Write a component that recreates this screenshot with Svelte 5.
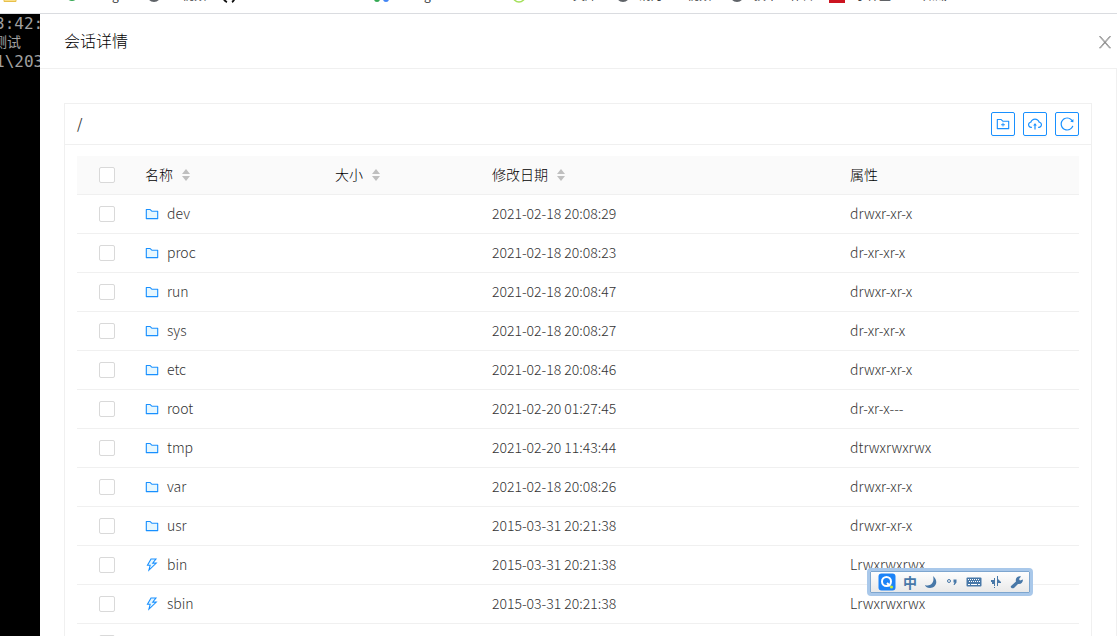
<script>
    const folder = "M880 298.4H521L403.7 186.2a8.15 8.15 0 00-5.5-2.2H144c-17.7 0-32 14.3-32 32v592c0 17.7 14.3 32 32 32h736c17.7 0 32-14.3 32-32V330.4c0-17.7-14.3-32-32-32zM840 768H184V256h188.5l119.6 114.4H840V768z";

    let files = [
        { name: "dev", date: "2021-02-18 20:08:29", mode: "drwxr-xr-x" },
        { name: "proc", date: "2021-02-18 20:08:23", mode: "dr-xr-xr-x" },
        { name: "run", date: "2021-02-18 20:08:47", mode: "drwxr-xr-x" },
        { name: "sys", date: "2021-02-18 20:08:27", mode: "dr-xr-xr-x" },
        { name: "etc", date: "2021-02-18 20:08:46", mode: "drwxr-xr-x" },
        { name: "root", date: "2021-02-20 01:27:45", mode: "dr-xr-x---" },
        { name: "tmp", date: "2021-02-20 11:43:44", mode: "dtrwxrwxrwx" },
        { name: "var", date: "2021-02-18 20:08:26", mode: "drwxr-xr-x" },
        { name: "usr", date: "2015-03-31 20:21:38", mode: "drwxr-xr-x" },
        { name: "bin", date: "2015-03-31 20:21:38", mode: "Lrwxrwxrwx" },
        { name: "sbin", date: "2015-03-31 20:21:38", mode: "Lrwxrwxrwx" },
        { name: "", date: "", mode: "" },
    ];

    let columns = [
        { title: "名称", sort: true },
        { title: "大小", sort: true },
        { title: "修改日期", sort: true },
        { title: "属性", sort: false },
    ];
</script>

<div class="page">
    <div class="bookmarks">
        <svg width="1117" height="13" font-size="12" fill="#3c4043">
            <path d="M4 -8h12v9.5h-12z" fill="#fbe08a" stroke="#e8c04a" />
            <circle cx="72" cy="-5" r="6" fill="#34a853" />
            <text x="112" y="0">g</text>
            <circle cx="154" cy="-5" r="7" fill="#5f6368" />
            <text x="182" y="0">视频</text>
            <path d="M223 -3q1 4 4 5M235 -3q-1 4 -3 5" fill="none" stroke="#111" stroke-width="2" />
            <circle cx="377" cy="-1" r="3" fill="#34a853" />
            <circle cx="386" cy="-1" r="3" fill="#4285f4" />
            <text x="424" y="0">g</text>
            <circle cx="519" cy="-4" r="6" fill="none" stroke="#a4e05a" stroke-width="1.5" />
            <text x="573" y="0">文库</text>
            <circle cx="623" cy="-5" r="7" fill="#5f6368" />
            <text x="639" y="0">消月</text>
            <text x="687" y="0">视频</text>
            <circle cx="737" cy="-5" r="7" fill="#5f6368" />
            <text x="754" y="0">技术工作台</text>
            <rect x="829" y="-8" width="16" height="11" fill="#cc1420" />
            <text x="855" y="0">小样里</text>
            <text x="911" y="0">个知識</text>
        </svg>
    </div>

    <div class="main">
        <div class="terminal">
            <p>3:42:</p>
            <p class="cjk">测试</p>
            <p>1\203</p>
        </div>

        <section class="drawer">
            <header class="drawer-header">
                <h1>会话详情</h1>
                <button class="close" aria-label="关闭">
                    <svg width="14" height="14" viewBox="0 0 14 14" fill="none" stroke="#808080">
                        <path d="M1.5 1.500h1L12.5 13h-1zM12.5 1.500h-1L1.5 13h1z" stroke-width=".8" />
                    </svg>
                </button>
            </header>

            <div class="drawer-body">
                <div class="card">
                    <div class="card-head">
                        <span class="path">/</span>
                        <div class="tools">
                            <button aria-label="新建文件夹">
                                <svg width="14" height="14" viewBox="64 64 896 896">
                                    <path d={folder} />
                                    <path d="M484 443.1V528h-84.5c-4.1 0-7.5 3.1-7.5 7v42c0 3.8 3.4 7 7.5 7H484v84.9c0 3.9 3.2 7.1 7 7.1h42c3.9 0 7-3.2 7-7.1V584h84.5c4.1 0 7.5-3.2 7.5-7v-42c0-3.9-3.4-7-7.5-7H540v-84.9c0-3.9-3.1-7.1-7-7.1h-42c-3.8 0-7 3.2-7 7.1z" />
                                </svg>
                            </button>
                            <button aria-label="上传">
                                <svg width="14" height="14" viewBox="64 64 896 896">
                                    <path d="M518.3 459a8 8 0 00-12.6 0l-112 141.7a7.98 7.98 0 006.3 12.9h73.9V856c0 4.4 3.6 8 8 8h60c4.4 0 8-3.6 8-8V613.7H624c6.7 0 10.4-7.7 6.3-12.9L518.3 459z" />
                                    <path d="M811.4 366.7C765.6 245.9 648.9 160 512.2 160S258.8 245.8 213 366.6C127.3 389.1 64 467.2 64 560c0 110.5 89.5 200 199.9 200H304c4.4 0 8-3.6 8-8v-60c0-4.4-3.6-8-8-8h-40.1c-33.7 0-65.4-13.4-89-37.7-23.5-24.2-36-56.8-34.9-90.6.9-26.4 9.9-51.2 26.2-72.1 16.7-21.3 40.1-36.8 66.1-43.7l37.9-9.9 13.9-36.6c8.6-22.8 20.6-44.1 35.7-63.4a245.6 245.6 0 0152.4-49.9c41.1-28.9 89.5-44.2 140-44.2s98.9 15.3 140 44.2c19.9 14 37.5 30.8 52.4 49.9 15.1 19.3 27.1 40.7 35.7 63.4l13.8 36.5 37.8 10C846.1 454.5 884 503.8 884 560c0 33.1-12.9 64.3-36.3 87.7a123.07 123.07 0 01-87.6 36.3H720c-4.4 0-8 3.6-8 8v60c0 4.4 3.6 8 8 8h40.1C870.5 760 960 670.5 960 560c0-92.7-63.1-170.7-148.6-193.3z" />
                                </svg>
                            </button>
                            <button aria-label="刷新">
                                <svg width="14" height="14" viewBox="64 64 896 896">
                                    <path d="M909.1 209.3l-56.4 44.1C775.8 155.1 656.2 92 521.9 92 290 92 102.3 279.5 102 511.5 101.7 743.7 289.8 932 521.9 932c181.3 0 335.8-115 394.6-276.1 1.5-4.2-.7-8.9-4.9-10.3l-56.7-19.5a8 8 0 00-10.1 4.8c-1.8 5-3.8 10-5.9 14.9-17.3 41-42.1 77.8-73.7 109.4A344.77 344.77 0 01655.9 829c-42.3 17.9-87.4 27-133.8 27-46.5 0-91.5-9.1-133.8-27A341.5 341.5 0 01279 755.2a342.16 342.16 0 01-73.7-109.4c-17.9-42.4-27-87.4-27-133.9s9.1-91.5 27-133.9c17.3-41 42.1-77.8 73.7-109.4 31.6-31.6 68.4-56.4 109.3-73.8 42.3-17.9 87.4-27 133.8-27 46.5 0 91.5 9.1 133.8 27a341.5 341.5 0 01109.3 73.8c9.9 9.9 19.2 20.4 27.8 31.4l-60.2 47a8 8 0 003 14.1l175.6 43c5 1.2 9.9-2.6 9.9-7.7l.8-180.9c-.1-6.6-7.8-10.3-13-6.2z" />
                                </svg>
                            </button>
                        </div>
                    </div>

                    <div class="card-body">
                        <table>
                            <colgroup>
                                <col class="c-check" />
                                <col class="c-name" />
                                <col class="c-size" />
                                <col class="c-date" />
                                <col />
                            </colgroup>
                            <thead>
                                <tr>
                                    <th class="check"><input type="checkbox" aria-label="全选" /></th>
                                    {#each columns as col}
                                        <th>
                                            <span class="title">
                                                {col.title}
                                                {#if col.sort}
                                                    <svg width="10" height="14" viewBox="0 0 10 14" fill="#bfbfbf">
                                                        <path d="M1 6L5 1l4 5zM1 8h8l-4 5z" />
                                                    </svg>
                                                {/if}
                                            </span>
                                        </th>
                                    {/each}
                                </tr>
                            </thead>
                            <tbody>
                                {#each files as file}
                                    <tr>
                                        <td class="check"><input type="checkbox" aria-label="选择 {file.name}" /></td>
                                        <td>
                                            {#if file.name}
                                                <span class="name">
                                                    <svg width="14" height="14" viewBox="64 64 896 896">
                                                        {#if file.mode[0] == "L"}
                                                            <path class="light" d="M695.4 164.1H470.8L281.2 491.5h157.4l-60.3 241 319.8-305.1h-211z" />
                                                            <path d="M848 359.3H627.7L825.8 109c4.1-5.3.4-13-6.3-13H436c-2.8 0-5.5 1.5-6.9 4L170 547.5c-3.1 5.3.7 12 6.9 12h174.4l-89.4 357.6c-1.9 7.8 7.5 13.3 13.3 7.7L853.5 373c5.2-4.9 1.7-13.7-5.5-13.7zM378.2 732.5l60.3-241H281.1l189.6-327.4h224.6L487 427.4h211L378.2 732.5z" />
                                                        {:else}
                                                            <path class="light" d="M372.5 256H184v512h656V370.4H492.1z" />
                                                            <path d={folder} />
                                                        {/if}
                                                    </svg>
                                                    {file.name}
                                                </span>
                                            {/if}
                                        </td>
                                        <td></td>
                                        <td>{file.date}</td>
                                        <td>{file.mode}</td>
                                    </tr>
                                {/each}
                            </tbody>
                        </table>
                    </div>
                </div>
            </div>
        </section>
    </div>

    <!-- floating input method bar -->
    <div class="ime">
        <svg width="18" height="18" viewBox="0 0 18 18">
            <rect x=".5" y=".5" width="17" height="17" rx="3" fill="#1c83f7" />
            <circle cx="8.5" cy="8.5" r="4.5" fill="none" stroke="#fff" stroke-width="2" />
            <path d="M9 10l3 3" stroke="#fff" stroke-width="2" />
            <circle cx="13.5" cy="14" r="1.6" fill="#c4ec3a" />
        </svg>
        <span class="lang">中</span>
        <svg width="14" height="14" viewBox="0 0 14 14">
            <path d="M9 1c6 5 3 12-3 12-3 0-5-2-5-3 5 2 10-2 8-9z" />
        </svg>
        <svg width="14" height="14" viewBox="0 0 14 14">
            <circle cx="4" cy="6" r="1.5" fill="none" stroke="#4878a8" />
            <path d="M8.5 4.500h3v3L9.500 10H8.500l1-2.500h-1z" />
        </svg>
        <svg width="16" height="14" viewBox="0 0 16 14">
            <rect x=".5" y="2.5" width="15" height="9" rx="1" />
            <path d="M2 4.500h12M3 6.500h11" stroke="#fff" stroke-dasharray="1 1" />
            <path d="M2 9.500h2M5 9.500h6M12 9.500h2" stroke="#fff" />
        </svg>
        <svg width="14" height="14" viewBox="0 0 14 14">
            <path d="M2 5h3V3h1v8H5V9H3v-2H2zM8 1h1v3l3 3v1H9v3H8zM5 12h1v1H5z" />
        </svg>
        <svg width="14" height="14" viewBox="0 0 14 14">
            <path d="M1 11l5-4.500C5 3 8 .5 11 1.500L9 4l1 1.500 3-1c0 3-2 5-5 4.500l-4 4C2 14 0 12.500 1 11z" />
        </svg>
    </div>
</div>

<style>
    :global(body){
        margin: 0;
        overflow: hidden;
    }
    .page{
        height: 100vh;
        display: flex;
        flex-direction: column;
        overflow: hidden;
        background: #fff;
        color: #333;
        font-family: "Noto Sans CJK SC", sans-serif;
        font-size: 14px;
        line-height: 20px;
    }
    .bookmarks{
        height: 13px;
        flex: none;
        overflow: hidden;
        border-bottom: 1px solid #dadce0;
    }
    .bookmarks svg{
        display: block;
    }
    .main{
        flex: 1;
        min-height: 0;
        display: flex;
        overflow: hidden;
    }
    .terminal{
        width: 40px;
        flex: none;
        overflow: hidden;
        background: #000;
        color: #a0a0a0;
        font-family: "DejaVu Sans Mono", "Noto Sans CJK SC", monospace;
        font-size: 16px;
        line-height: 19px;
        white-space: nowrap;
    }
    .terminal p{
        margin: 0;
        text-indent: -5px;
    }
    .terminal .cjk{
        font-size: 14px;
        text-indent: -7px;
    }
    .drawer{
        flex: 1;
        min-width: 0;
    }
    .drawer-header{
        height: 54px;
        display: flex;
        align-items: center;
        justify-content: space-between;
        padding: 0 5px 0 24px;
        border-bottom: 1px solid #f0f0f0;
    }
    h1{
        margin: 0;
        padding-bottom: 2px;
        font-size: 16px;
        font-weight: 300;
        color: #000;
    }
    .close{
        display: flex;
        padding: 2px 0 0;
        border: 0;
        background: none;
    }
    .drawer-body{
        padding: 34px 24px 0;
        border-right: 1px solid #f0f0f0;
    }
    .card{
        border: 1px solid #f0f0f0;
    }
    .card-head{
        height: 40px;
        display: flex;
        align-items: center;
        justify-content: space-between;
        padding: 0 12px;
        border-bottom: 1px solid #f0f0f0;
    }
    .path{
        padding-bottom: 2px;
    }
    .tools{
        display: flex;
        gap: 8px;
    }
    .tools button{
        width: 24px;
        height: 24px;
        display: flex;
        align-items: center;
        justify-content: center;
        padding: 0;
        border: 1px solid #1890ff;
        border-radius: 2px;
        background: #fff;
        box-shadow: 0 2px 0 rgba(0, 0, 0, .02);
        fill: #1890ff;
    }
    .card-body{
        padding: 11px 12px;
    }
    table{
        width: 100%;
        table-layout: fixed;
        border-collapse: separate;
        border-spacing: 0;
    }
    .c-check{
        width: 60px;
    }
    .c-name{
        width: 190px;
    }
    .c-size{
        width: 157px;
    }
    .c-date{
        width: 358px;
    }
    th, td{
        height: 22px;
        padding: 8px;
        border-bottom: 1px solid #f0f0f0;
        text-align: left;
        vertical-align: top;
        font-weight: 300;
        white-space: nowrap;
    }
    th{
        background: #fafafa;
        color: #000;
    }
    .check{
        text-align: center;
        vertical-align: middle;
        line-height: 0;
    }
    input{
        appearance: none;
        width: 16px;
        height: 16px;
        margin: 0;
        border: 1px solid #d9d9d9;
        border-radius: 2px;
        background: #fff;
        vertical-align: middle;
    }
    .title, .name{
        display: flex;
        align-items: flex-start;
        gap: 8px;
    }
    .title svg, .name svg{
        margin-top: 4px;
    }
    .name svg{
        fill: #1890ff;
    }
    .name .light{
        fill: #e6f7ff;
    }
    .ime{
        position: absolute;
        right: 84px;
        bottom: 40px;
        display: flex;
        align-items: center;
        gap: 7px;
        height: 22px;
        padding: 0 6px 0 8px;
        border: 3px solid #a9c8ea;
        border-radius: 4px;
        outline: 1px solid #7ea6cf;
        outline-offset: -4px;
        background: linear-gradient(#fff, #e8e8e8);
        fill: #4878a8;
    }
    .lang{
        font-weight: 700;
        color: #4878a8;
    }
</style>
